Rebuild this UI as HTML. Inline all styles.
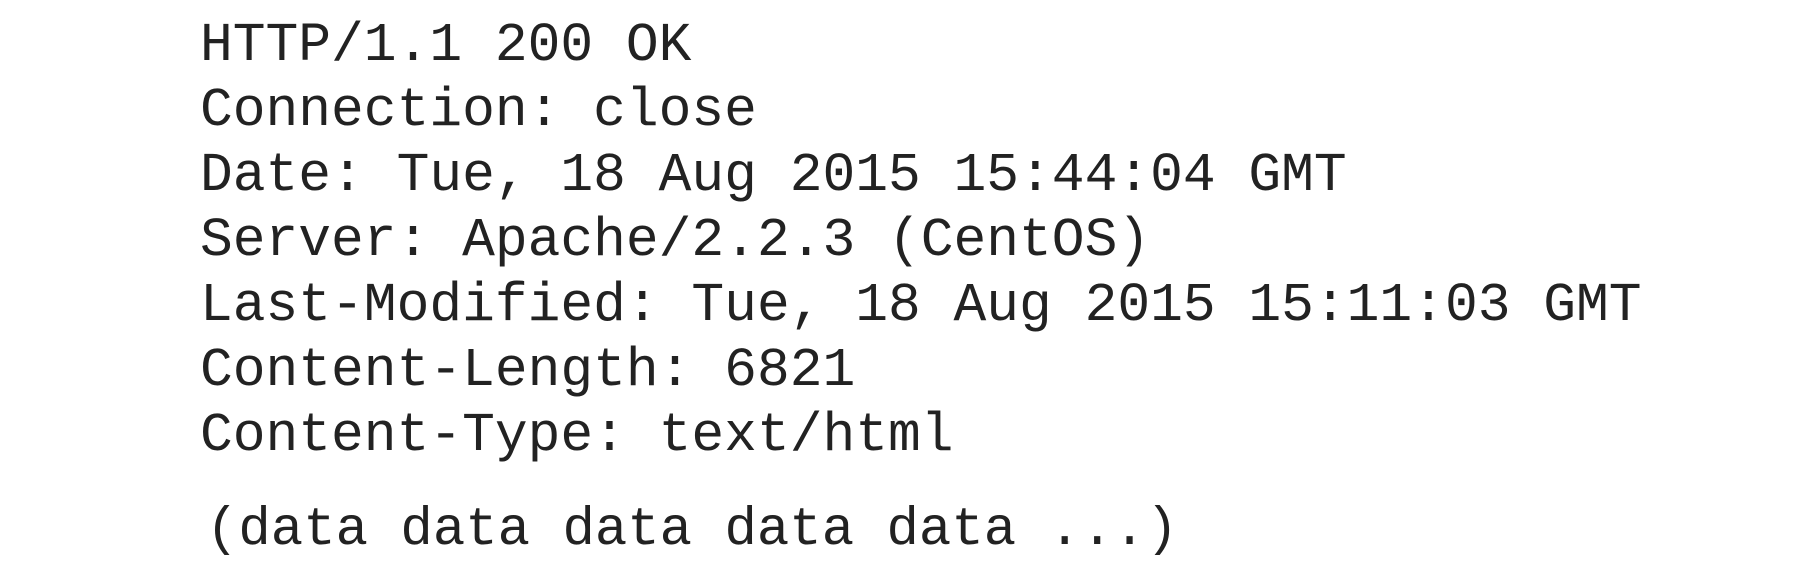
<!DOCTYPE html>
<html><head><meta charset="utf-8"><style>
html,body{margin:0;padding:0;background:#fff;width:1816px;height:580px;overflow:hidden}
.t{position:absolute;font-family:"Liberation Mono",monospace;color:#222;white-space:pre;line-height:65px}
</style></head><body>
<div class="t" style="left:200px;top:14px;font-size:54.6px">HTTP/1.1 200 OK
Connection: close
Date: Tue, 18 Aug 2015 15:44:04 GMT
Server: Apache/2.2.3 (CentOS)
Last-Modified: Tue, 18 Aug 2015 15:11:03 GMT
Content-Length: 6821
Content-Type: text/html</div>
<div class="t" style="left:206px;top:498px;font-size:54px">(data data data data data ...)</div>
</body></html>
